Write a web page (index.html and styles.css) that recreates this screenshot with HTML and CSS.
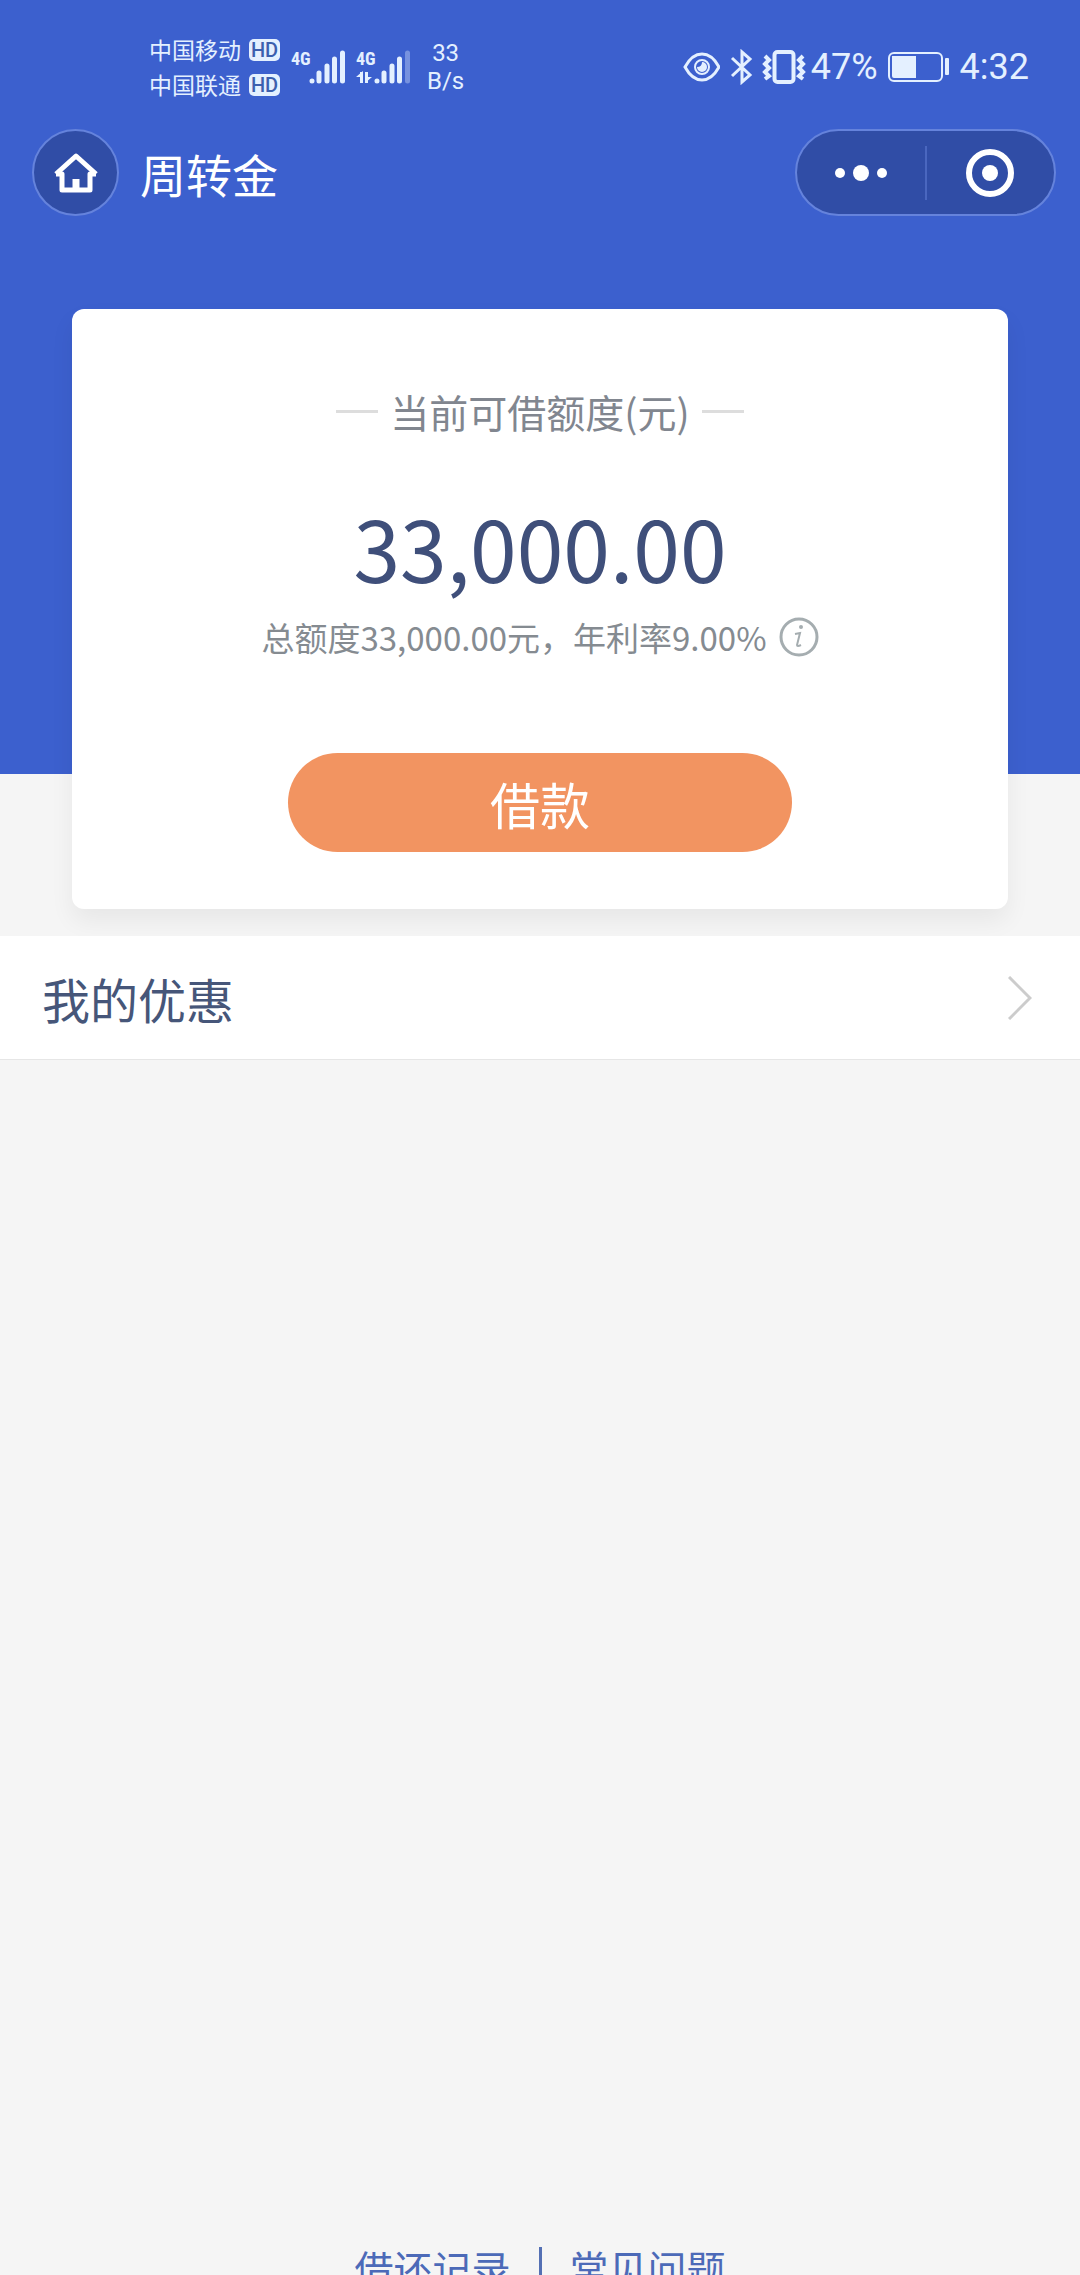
FILE: index.html
```html
<!DOCTYPE html>
<html lang="zh-CN">
<head>
<meta charset="utf-8">
<meta name="viewport" content="width=device-width, initial-scale=1">
<title>周转金</title>
<link rel="stylesheet" href="styles.css">
</head>
<body>
<header class="top">
  <div class="status">
    <div class="carriers">
      <div class="carrier">中国移动<span class="hd">HD</span></div>
      <div class="carrier">中国联通<span class="hd">HD</span></div>
    </div>
    <div class="signals">
      <svg class="signal" width="55" height="36" viewBox="0 0 55 36" aria-hidden="true">
        <text class="net" x="0" y="16">4G</text>
        <g stroke="currentColor" stroke-width="5" stroke-linecap="round"><path d="M21 32v0M28 32v-8M36 32v-15M43.500 32v-22M51.500 32v-28"/></g>
      </svg>
      <svg class="signal" width="55" height="36" viewBox="0 0 55 36" aria-hidden="true">
        <text class="net" x="0" y="16">4G</text>
        <path d="M5.500 34v-11M10.500 23v11" stroke="currentColor" stroke-width="3"/><path d="M7 22v6H0zM9 34v-6h7z" fill="currentColor"/>
        <g stroke="currentColor" stroke-width="5" stroke-linecap="round"><path d="M21 32v0M28 32v-8M36 32v-15M43.500 32v-22"/><path d="M51.500 32v-28" opacity=".35"/></g>
      </svg>
    </div>
    <div class="speed"><span>33</span><span>B/s</span></div>
    <div class="system">
      <svg width="38" height="36" viewBox="0 0 38 36" fill="none" stroke="currentColor" stroke-width="3" aria-hidden="true"><path d="M3 18Q10 5 20 5t17 13Q30 31 20 31T3 18Z"/><circle cx="20" cy="18" r="7" stroke-width="2"/><path d="M20 13a5 5 0 1 1-5 5q5 0 5-5z" fill="currentColor" stroke="none"/></svg>
      <svg class="bt" width="24" height="36" viewBox="0 0 24 36" fill="none" stroke="currentColor" stroke-width="3" aria-hidden="true"><path d="M2 9l18 17-8 7V3l8 7L2 27"/></svg>
      <svg width="44" height="36" viewBox="0 0 44 36" fill="none" stroke="currentColor" aria-hidden="true"><rect x="12.500" y="3" width="19" height="30" rx="3" stroke-width="4"/><path d="M3 7l4 4-4 4 4 4-4 4 4 4-4 3M41 7l-4 4 4 4-4 4 4 4-4 4 4 3" stroke-width="4"/></svg>
      <span class="percent">47%</span>
      <svg class="battery" width="62" height="32" viewBox="0 0 62 32" aria-hidden="true"><rect x="1" y="2" width="53" height="28" rx="5" fill="none" stroke="currentColor" stroke-width="2"/><path d="M4 5h24v22H6q-2 0-2-2z" fill="currentColor"/><rect x="57" y="7" width="4" height="17" rx="1" fill="currentColor"/></svg>
      <time class="clock">4:32</time>
    </div>
  </div>
  <nav class="bar">
    <button class="home" aria-label="首页"><svg width="46" height="42" viewBox="0 0 46 42" fill="none" stroke="currentColor" stroke-width="5" aria-hidden="true"><path d="M3 22L23 4l20 18M3 22h6v16h28V22h6" stroke-linejoin="round"/><path d="M23 27v11" stroke-width="7"/></svg></button>
    <h1 class="title">周转金</h1>
    <div class="capsule">
      <button class="cap" aria-label="更多"><svg width="52" height="18" viewBox="0 0 52 18" fill="currentColor" aria-hidden="true"><circle cx="5" cy="9" r="5"/><circle cx="26" cy="9" r="8"/><circle cx="47" cy="9" r="5"/></svg></button>
      <button class="cap" aria-label="关闭"><svg width="48" height="48" viewBox="0 0 48 48" aria-hidden="true"><circle cx="24" cy="24" r="21" fill="none" stroke="currentColor" stroke-width="6"/><circle cx="24" cy="24" r="8" fill="currentColor"/></svg></button>
    </div>
  </nav>
</header>
<main class="content">
  <section class="card">
    <h2 class="label">当前可借额度(元)</h2>
    <p class="amount">33,000.00</p>
    <p class="detail">总额度33,000.00元，年利率9.00%
      <button class="info" aria-label="说明"><svg width="40" height="40" viewBox="0 0 40 40" fill="none" stroke="currentColor" aria-hidden="true"><circle cx="20" cy="20" r="18" stroke-width="3"/><path d="M16 17l5-1-3 12q0 2 4 0" stroke-width="2"/><circle cx="22" cy="10" r="2" fill="currentColor" stroke="none"/></svg></button>
    </p>
    <button class="borrow">借款</button>
  </section>
  <a class="row" href="#offers">我的优惠
    <svg width="24" height="44" viewBox="0 0 24 44" fill="none" stroke="#ccc" stroke-width="3" aria-hidden="true"><path d="M1 1l21 21L1 43"/></svg>
  </a>
</main>
<footer class="links">
  <a href="#records">借还记录</a>
  <a href="#faq">常见问题</a>
</footer>
</body>
</html>
```

FILE: styles.css
```css
* { box-sizing: border-box; }

body {
  margin: 0;
  height: 100vh;
  overflow: hidden;
  display: flex;
  flex-direction: column;
  background: #f5f5f5;
  font-family: "Noto Sans CJK SC", sans-serif;
}

h1, h2, p { margin: 0; font-weight: 400; }
a { text-decoration: none; }
svg { display: block; flex: none; }

button {
  display: flex;
  align-items: center;
  justify-content: center;
  padding: 0;
  border: 0;
  background: none;
  color: inherit;
  font: inherit;
}

.top {
  padding: 32px 24px 558px 32px;
  background: #3c60ce;
  color: #fff;
}

.status {
  display: flex;
  align-items: center;
  height: 70px;
  padding-left: 117px;
  color: #e4f0ff;
}

.carrier {
  display: flex;
  align-items: center;
  gap: 8px;
  font-size: 23px;
  line-height: 35px;
}

.hd {
  width: 31px;
  border-radius: 5px;
  background: #e4f0ff;
  color: #3c5fae;
  font: 500 20px/22px Roboto, sans-serif;
  text-align: center;
}

.signals { display: flex; gap: 10px; margin-left: 11px; }
.net { fill: currentColor; font: 700 18px "Roboto Condensed", "Liberation Sans Narrow", Roboto, sans-serif; }

.speed {
  display: flex;
  flex-direction: column;
  margin-left: 16px;
  font: 24px/28px Roboto, sans-serif;
  text-align: center;
}

.system {
  display: flex;
  align-items: center;
  margin-left: auto;
  padding-right: 27px;
  font: 36px/40px Roboto, sans-serif;
}

.bt { margin: 0 8px 0 10px; }
.percent { margin-left: 5px; }
.battery { margin: 0 10px; }

.bar {
  display: flex;
  align-items: center;
  margin-top: 27px;
  height: 87px;
}

.home {
  width: 87px;
  height: 87px;
  border: 2px solid #6583dc;
  border-radius: 50%;
  background: #304da6;
}

.title { margin-left: 21px; font-size: 46px; line-height: 60px; }

.capsule {
  display: flex;
  align-items: center;
  width: 261px;
  height: 87px;
  margin-left: auto;
  border: 2px solid #6583dc;
  border-radius: 44px;
  background: #304da6;
}

.cap { flex: 1; height: 54px; }
.cap + .cap { border-left: 2px solid #4a67bf; }

.content { flex: 1; margin-top: -465px; }

.card {
  display: flex;
  flex-direction: column;
  align-items: center;
  margin: 0 72px 27px;
  padding: 72px 0 57px;
  border-radius: 12px;
  background: #fff;
  box-shadow: 0 12px 24px rgba(0, 0, 0, .06);
}

.label {
  display: flex;
  align-items: center;
  gap: 12px;
  color: #81868f;
  font-size: 39px;
  line-height: 60px;
}

.label::before, .label::after {
  content: "";
  width: 42px;
  height: 3px;
  background: #ddd;
}

.amount {
  margin-top: 46px;
  color: #3f4f7a;
  font-size: 84px;
  line-height: 120px;
}

.detail {
  display: flex;
  align-items: center;
  gap: 12px;
  margin-top: 3px;
  color: #858b91;
  font-size: 33px;
  line-height: 54px;
}

.info { color: #a5adb0; }

.borrow {
  width: 504px;
  height: 99px;
  margin-top: 89px;
  border-radius: 50px;
  background: #f29461;
  color: #fff;
  font-size: 50px;
}

.row {
  display: flex;
  align-items: center;
  justify-content: space-between;
  height: 124px;
  padding: 0 48px 0 42px;
  border-bottom: 1px solid #e6e6e6;
  background: #fff;
  color: #465679;
  font-size: 48px;
}

/* The links run past the lower edge of the screen. */
.links {
  display: flex;
  justify-content: center;
  height: 28px;
  color: #4c6ab8;
  font-size: 39px;
  line-height: 40px;
}

.links a { height: 40px; padding: 0 28px; color: inherit; }
.links a + a { border-left: 3px solid #5470b4; }
```
